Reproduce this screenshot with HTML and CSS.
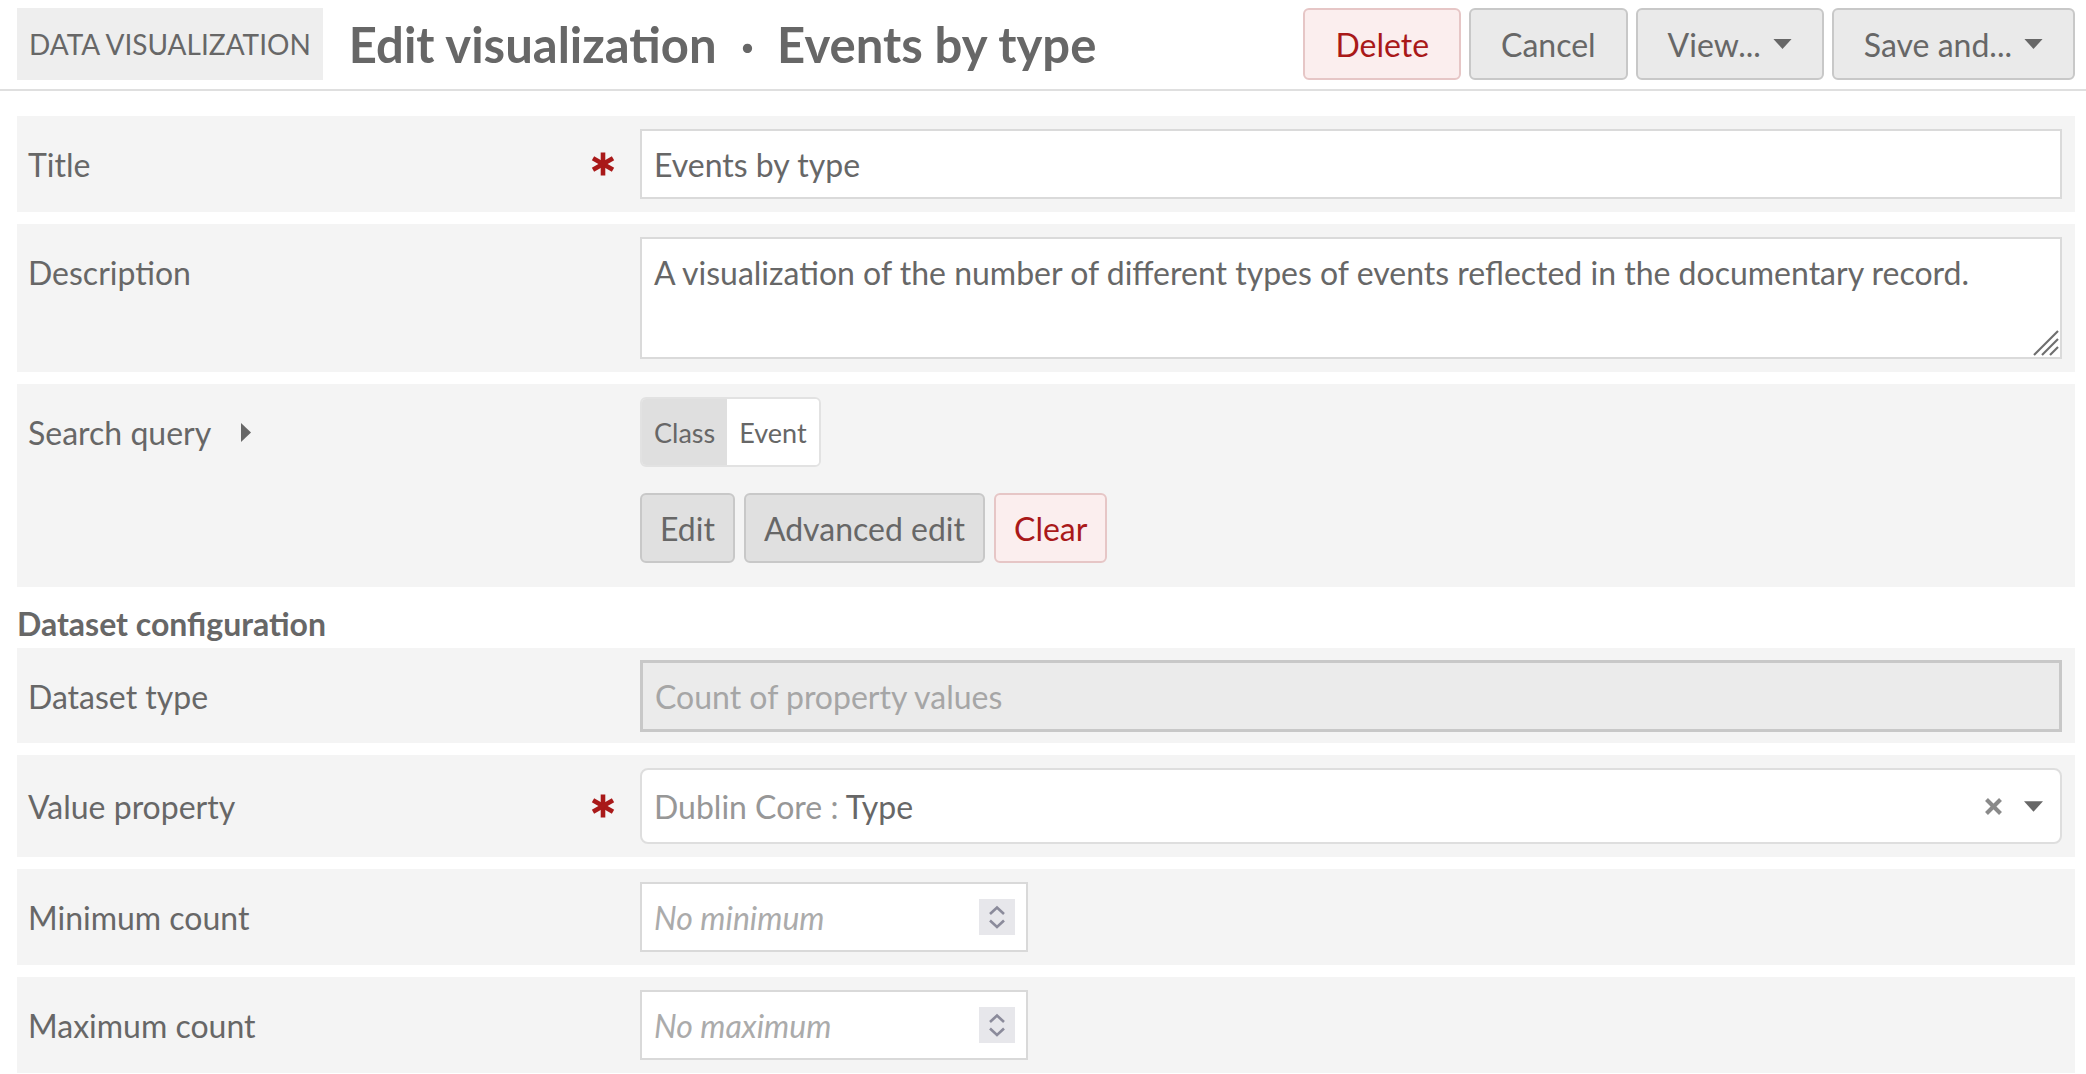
FILE: index.html
```html
<!DOCTYPE html>
<html lang="en">
<head>
<meta charset="utf-8">
<title>Edit visualization · Events by type</title>
<link rel="stylesheet" href="styles.css">
</head>
<body>
<header class="page-header">
  <div class="kicker">DATA VISUALIZATION</div>
  <h1 class="page-title">Edit visualization<span class="sep">·</span>Events by type</h1>
  <div class="actions">
    <button class="btn btn-lg btn-danger" type="button">Delete</button>
    <button class="btn btn-lg" type="button">Cancel</button>
    <button class="btn btn-lg btn-drop" type="button">View...<svg class="caret" viewBox="0 0 20 11" width="19" height="10"><path d="M0 0h20L10 11z"/></svg></button>
    <button class="btn btn-lg btn-drop" type="button">Save and...<svg class="caret" viewBox="0 0 20 11" width="19" height="10"><path d="M0 0h20L10 11z"/></svg></button>
  </div>
</header>

<main class="form">
  <div class="field">
    <div class="field-meta">
      <label for="title">Title</label>
      <svg class="req" viewBox="-12 -12 24 24" width="24" height="24"><g stroke="#a91919" stroke-width="4.6"><line x1="0" y1="-11.5" x2="0" y2="11.5"/><line x1="-10" y1="-5.8" x2="10" y2="5.8"/><line x1="-10" y1="5.8" x2="10" y2="-5.8"/></g></svg>
    </div>
    <div class="field-input">
      <input id="title" class="text-input" type="text" value="Events by type">
    </div>
  </div>

  <div class="field">
    <div class="field-meta">
      <label for="desc">Description</label>
    </div>
    <div class="field-input textarea-wrap">
      <textarea id="desc" class="textarea">A visualization of the number of different types of events reflected in the documentary record.</textarea>
      <svg class="grip" viewBox="0 0 26 26" width="26" height="26"><g stroke="#6e6e6e" stroke-width="2.2"><line x1="1" y1="25" x2="25" y2="1"/><line x1="9" y1="25" x2="25" y2="9"/><line x1="17" y1="25" x2="25" y2="17"/></g></svg>
    </div>
  </div>

  <div class="field">
    <div class="field-meta">
      <label class="with-caret">Search query<svg class="side-caret" viewBox="0 0 10 19" width="10" height="19"><path d="M0 0L10 9.5L0 19z"/></svg></label>
    </div>
    <div class="field-input query">
      <div class="toggle"><span class="toggle-key">Class</span><span class="toggle-val">Event</span></div>
      <div class="btn-row">
        <button class="btn" type="button">Edit</button>
        <button class="btn" type="button">Advanced edit</button>
        <button class="btn btn-danger" type="button">Clear</button>
      </div>
    </div>
  </div>

  <h2 class="section-title">Dataset configuration</h2>

  <div class="field field-disabled">
    <div class="field-meta tall">
      <label for="dtype">Dataset type</label>
    </div>
    <div class="field-input">
      <input id="dtype" class="text-input disabled" type="text" value="Count of property values" disabled>
    </div>
  </div>

  <div class="field">
    <div class="field-meta taller">
      <label>Value property</label>
      <svg class="req" viewBox="-12 -12 24 24" width="24" height="24"><g stroke="#a91919" stroke-width="4.6"><line x1="0" y1="-11.5" x2="0" y2="11.5"/><line x1="-10" y1="-5.8" x2="10" y2="5.8"/><line x1="-10" y1="5.8" x2="10" y2="-5.8"/></g></svg>
    </div>
    <div class="field-input">
      <div class="select">
        <span class="select-value"><span class="vocab">Dublin Core</span><span class="colon"> : </span>Type</span>
        <svg class="clear-x" viewBox="0 0 17 17" width="17" height="17"><g stroke="#8a8a8a" stroke-width="4"><line x1="1.5" y1="1.5" x2="15.5" y2="15.5"/><line x1="15.5" y1="1.5" x2="1.5" y2="15.5"/></g></svg>
        <svg class="select-caret" viewBox="0 0 20 11" width="19" height="11"><path d="M0 0h20L10 11z"/></svg>
      </div>
    </div>
  </div>

  <div class="field">
    <div class="field-meta">
      <label for="min">Minimum count</label>
    </div>
    <div class="field-input">
      <div class="number">
        <input id="min" class="number-input" type="text" placeholder="No minimum">
        <span class="spin"><svg viewBox="0 0 36 36" width="36" height="36"><g fill="none" stroke="#8b8b9b" stroke-width="2.6"><polyline points="11,15 18,8.5 25,15"/><polyline points="11,21.5 18,28 25,21.5"/></g></svg></span>
      </div>
    </div>
  </div>

  <div class="field">
    <div class="field-meta">
      <label for="max">Maximum count</label>
    </div>
    <div class="field-input">
      <div class="number">
        <input id="max" class="number-input" type="text" placeholder="No maximum">
        <span class="spin"><svg viewBox="0 0 36 36" width="36" height="36"><g fill="none" stroke="#8b8b9b" stroke-width="2.6"><polyline points="11,15 18,8.5 25,15"/><polyline points="11,21.5 18,28 25,21.5"/></g></svg></span>
      </div>
    </div>
  </div>
</main>
</body>
</html>
```

FILE: styles.css
```css
* {
  box-sizing: border-box;
}

html, body {
  margin: 0;
  padding: 0;
  background: #ffffff;
}

body {
  font-family: "Lato", "Open Sans", sans-serif;
  font-size: 32px;
  color: #676767;
}

button, input, textarea {
  font-family: inherit;
  font-size: inherit;
  color: inherit;
}

/* ---------- header ---------- */

.page-header {
  display: flex;
  align-items: center;
  padding: 8px 11px 9px 17px;
  border-bottom: 2px solid #dfdfdf;
}

.kicker {
  height: 72px;
  display: flex;
  align-items: center;
  padding: 0 12px;
  background: #eeeeee;
  font-size: 28px;
  white-space: nowrap;
}

.page-title {
  margin: 0 0 0 26px;
  font-size: 49px;
  font-weight: 700;
  line-height: 72px;
  white-space: nowrap;
  flex: 1;
}

.sep {
  margin: 0 23px 0 24px;
}

.actions {
  display: flex;
  gap: 8px;
}

/* ---------- buttons ---------- */

.btn {
  height: 70px;
  display: inline-flex;
  align-items: center;
  padding: 0 18px;
  border: 2px solid #c8c8c8;
  border-radius: 6px;
  background: #e0e0e0;
  color: #676767;
  cursor: pointer;
  white-space: nowrap;
}

.btn-lg {
  height: 72px;
  padding: 0 30px;
  background: #eaeaea;
}

.btn-danger {
  background: #fbeeee;
  border-color: #e6c6c6;
  color: #a91919;
}

.btn-drop .caret {
  margin-left: 12px;
  fill: #676767;
}

/* ---------- form rows ---------- */

.form {
  display: flex;
  flex-direction: column;
  gap: 12px;
  padding: 25px 11px 0 17px;
}

.field {
  display: grid;
  grid-template-columns: 612px 1fr;
  align-items: start;
  padding: 13px 13px 13px 11px;
  background: #f4f4f4;
}

.field-disabled {
  padding: 12px 13px 11px 11px;
}

.field-meta {
  height: 70px;
  display: flex;
  align-items: center;
  justify-content: space-between;
  padding-right: 25px;
}

.field-meta.tall {
  height: 72px;
}

.field-meta.taller {
  height: 76px;
}

.field-meta label {
  white-space: nowrap;
}

.with-caret {
  display: flex;
  align-items: center;
  gap: 30px;
}

.side-caret {
  fill: #676767;
}

.req {
  display: block;
}

.text-input {
  display: block;
  width: 100%;
  height: 70px;
  padding: 0 12px;
  border: 2px solid #dadada;
  border-radius: 0;
  background: #ffffff;
  outline: none;
}

.text-input.disabled {
  height: 72px;
  border: 3px solid #c8c8c8;
  background: #ebebeb;
  color: #a6a6a6;
  -webkit-text-fill-color: #a6a6a6;
  opacity: 1;
}

.textarea-wrap {
  position: relative;
}

.textarea {
  display: block;
  width: 100%;
  height: 122px;
  padding: 10px 12px;
  border: 2px solid #dadada;
  border-radius: 0;
  background: #ffffff;
  line-height: 48px;
  resize: none;
  outline: none;
}

.grip {
  position: absolute;
  right: 3px;
  bottom: 3px;
  display: block;
}

/* search query */

.query {
  display: flex;
  flex-direction: column;
  align-items: flex-start;
  gap: 26px;
  padding-bottom: 11px;
}

.toggle {
  height: 70px;
  display: flex;
  border: 2px solid #e2e2e2;
  border-radius: 6px;
  overflow: hidden;
  font-size: 27px;
}

.toggle span {
  display: flex;
  align-items: center;
  padding: 0 12px;
}

.toggle-key {
  background: #dfdfdf;
}

.toggle-val {
  background: #ffffff;
}

.btn-row {
  display: flex;
  gap: 9px;
}

/* section heading */

.section-title {
  margin: 1px 0 -12px 0;
  font-size: 32px;
  font-weight: 700;
  line-height: 48px;
}

/* select */

.select {
  height: 76px;
  display: flex;
  align-items: center;
  padding: 0 17px 0 12px;
  border: 2px solid #dedede;
  border-radius: 8px;
  background: #ffffff;
}

.select-value {
  flex: 1;
  white-space: nowrap;
}

.vocab, .colon {
  color: #979797;
}

.clear-x {
  margin-right: 22px;
}

.select-caret {
  fill: #676767;
}

/* number */

.number {
  width: 388px;
  height: 70px;
  display: flex;
  align-items: center;
  padding: 0 11px 0 12px;
  border: 2px solid #d9d9d9;
  background: #ffffff;
}

.number-input {
  flex: 1;
  min-width: 0;
  height: 100%;
  padding: 0;
  border: 0;
  background: transparent;
  outline: none;
}

.number-input::placeholder {
  color: #ababab;
  font-style: italic;
}

.spin {
  width: 36px;
  height: 36px;
  display: block;
  background: #e7e7eb;
}

.spin svg {
  display: block;
}
```
